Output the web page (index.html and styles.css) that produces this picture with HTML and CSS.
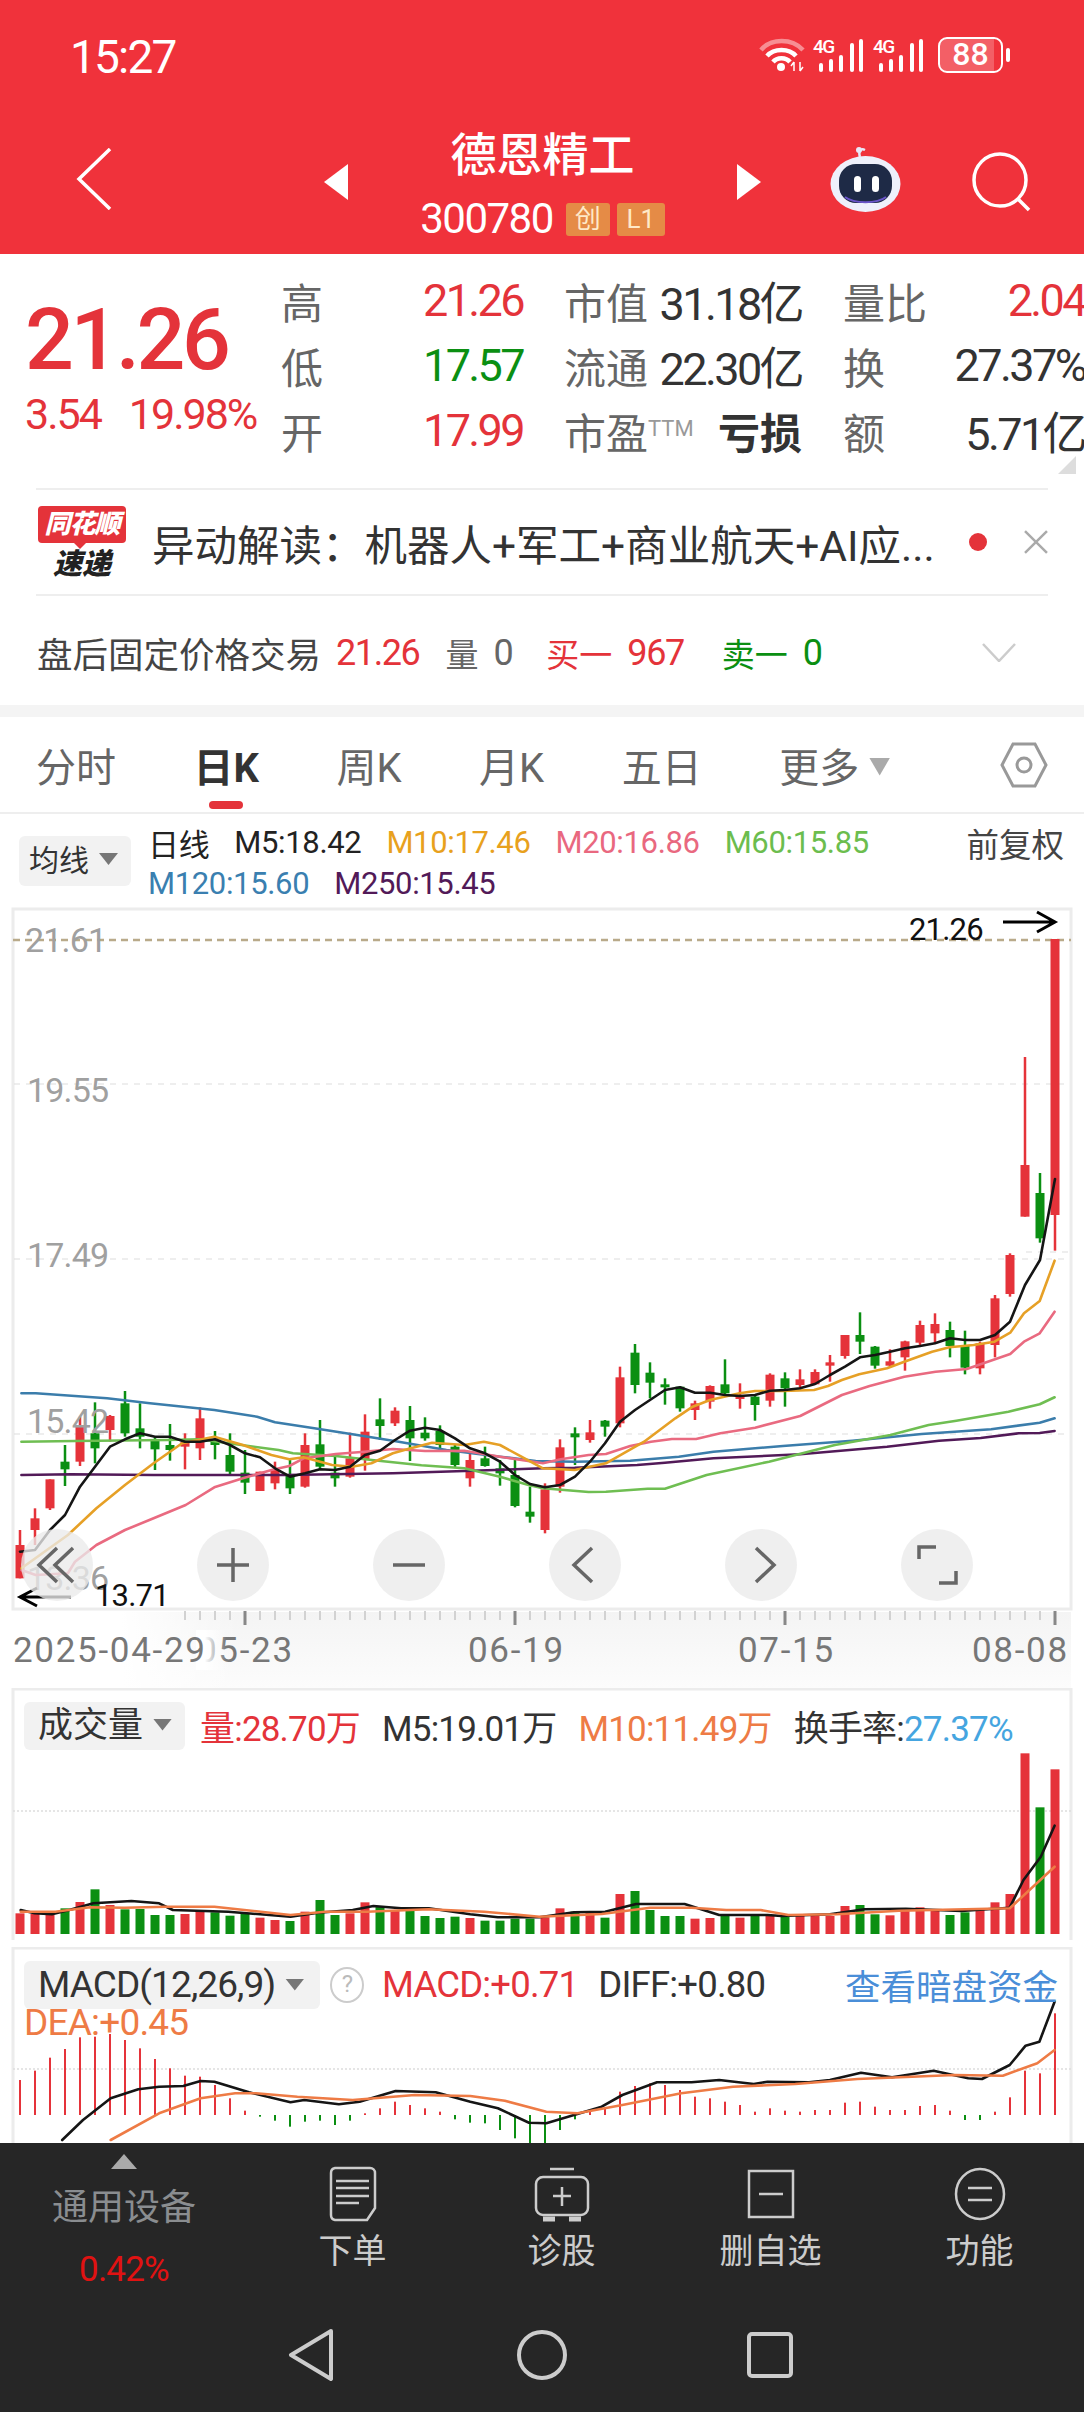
FILE: index.html
```html
<!DOCTYPE html>
<html lang="zh">
<head>
	<meta charset="UTF-8">
	<title>德恩精工 300780</title>
	<link rel="stylesheet" href="styles.css">
</head>
<body>
	<header class="top">
		<div class="status">
			<span class="time">15:27</span>
			<div class="status-icons">
				<svg class="wifi" width="46" height="35" viewBox="0 0 46 35">
					<path class="arc faint" d="M2 13 C12 1 33 1 44 13"/>
					<path class="arc" d="M8 19 C15 11 30 11 37 19"/>
					<path class="arc" d="M14 25 C18 20 27 20 31 25"/>
					<circle cx="22" cy="30" r="4" fill="#fff"/>
					<path class="arrows" d="M35 25 v9 M35 25 l-3 4 M41 34 v-9 M41 34 l3 -4"/>
				</svg>
				<svg class="signal" width="52" height="35" viewBox="0 0 52 35">
					<text x="0" y="16" class="net">4G</text>
					<rect x="6" y="26" width="4" height="9" rx="2"/>
					<rect x="16" y="22" width="4" height="13" rx="2"/>
					<rect x="26" y="18" width="4" height="17" rx="2"/>
					<rect x="37" y="6" width="4" height="29" rx="2"/>
					<rect x="46" y="2" width="4" height="33" rx="2"/>
				</svg>
				<svg class="signal" width="52" height="35" viewBox="0 0 52 35">
					<text x="0" y="16" class="net">4G</text>
					<rect x="6" y="26" width="4" height="9" rx="2"/>
					<rect x="16" y="22" width="4" height="13" rx="2"/>
					<rect x="26" y="18" width="4" height="17" rx="2"/>
					<rect x="37" y="6" width="4" height="29" rx="2"/>
					<rect x="46" y="2" width="4" height="33" rx="2"/>
				</svg>
				<div class="battery"><span>88</span></div>
				<div class="battery-nub"></div>
			</div>
		</div>
		<div class="nav">
			<svg class="back" width="36" height="62" viewBox="0 0 36 62"><path d="M34 1 L3 31 L34 61"/></svg>
			<div class="tri tri-left"></div>
			<div class="title">
				<div class="name">德恩精工</div>
				<div class="code-line">
					<span class="code">300780</span>
					<span class="tag">创</span>
					<span class="tag tag-l1">L1</span>
				</div>
			</div>
			<div class="tri tri-right"></div>
			<svg class="robot" width="71" height="66" viewBox="0 0 71 66">
				<path d="M30 10 C28 4 31 1 35 3" fill="none" stroke="#e8e8f8" stroke-width="2.5"/>
				<circle cx="29" cy="3" r="3" fill="#e8e8f8"/>
				<ellipse cx="35.5" cy="37" rx="35" ry="28" fill="#eef0fb"/>
				<rect x="9" y="17" width="53" height="39" rx="17" fill="#1e2a46"/>
				<path d="M15 50 C24 57 47 57 56 50" fill="none" stroke="#6a55c8" stroke-width="2"/>
				<rect x="24" y="29" width="7" height="16" rx="3.5" fill="#fff"/>
				<rect x="42" y="29" width="7" height="16" rx="3.5" fill="#fff"/>
			</svg>
			<svg class="search" width="60" height="60" viewBox="0 0 60 60">
				<circle cx="28" cy="28" r="26"/>
				<path d="M46 47 L57 58"/>
			</svg>
		</div>
	</header>

	<section class="quote">
		<div class="quote-main">
			<div class="price">
				<div class="last">21.26</div>
				<div class="change"><span>3.54</span><span>19.98%</span></div>
			</div>
			<div class="stats">
				<div class="stat"><span class="lbl">高</span><span class="val red">21.26</span></div>
				<div class="stat"><span class="lbl">市值</span><span class="val">31.18亿</span></div>
				<div class="stat"><span class="lbl">量比</span><span class="val red">2.04</span></div>
				<div class="stat"><span class="lbl">低</span><span class="val green">17.57</span></div>
				<div class="stat"><span class="lbl">流通</span><span class="val">22.30亿</span></div>
				<div class="stat"><span class="lbl">换</span><span class="val">27.37%</span></div>
				<div class="stat"><span class="lbl">开</span><span class="val red">17.99</span></div>
				<div class="stat"><span class="lbl">市盈<sup class="ttm">TTM</sup></span><span class="val strong">亏损</span></div>
				<div class="stat"><span class="lbl">额</span><span class="val">5.71亿</span></div>
			</div>
			<div class="corner"></div>
		</div>
		<div class="news">
			<div class="news-logo">
				<div class="news-tag">同花顺</div>
				<div class="news-fast">速递</div>
			</div>
			<div class="news-text">异动解读：机器人+军工+商业航天+AI应...</div>
			<div class="dot"></div>
			<svg class="close" width="24" height="24" viewBox="0 0 24 24"><path d="M1 1 L23 23 M23 1 L1 23"/></svg>
		</div>
		<div class="after">
			<span class="after-name">盘后固定价格交易</span>
			<span class="after-num red">21.26</span>
			<span class="after-lbl">量</span>
			<span class="after-num zero">0</span>
			<span class="after-cn red">买一</span>
			<span class="after-num red">967</span>
			<span class="after-cn green sell">卖一</span>
			<span class="after-num green">0</span>
			<svg class="after-arrow" width="34" height="19" viewBox="0 0 34 19"><path d="M1 1 L17 18 L33 1"/></svg>
		</div>
	</section>

	<div class="band"></div>

	<nav class="tabs">
		<span class="tab">分时</span>
		<span class="tab active">日K</span>
		<span class="tab">周K</span>
		<span class="tab">月K</span>
		<span class="tab">五日</span>
		<span class="tab more">更多<i class="caret"></i></span>
		<svg class="gear" width="48" height="46" viewBox="0 0 48 46">
			<path d="M13 2 H35 L46 23 L35 44 H13 L2 23 Z"/>
			<circle cx="24" cy="23" r="7"/>
		</svg>
	</nav>

	<div class="legend">
		<div class="select ma-select">均线<i class="caret dark"></i></div>
		<div class="legend-rows">
			<div class="legend-row">
				<span class="ma-black">日线</span>
				<span class="ma-black">M5:18.42</span>
				<span class="ma10">M10:17.46</span>
				<span class="ma20">M20:16.86</span>
				<span class="ma60">M60:15.85</span>
				<span class="adjust">前复权</span>
			</div>
			<div class="legend-row">
				<span class="ma120">M120:15.60</span>
				<span class="ma250">M250:15.45</span>
			</div>
		</div>
	</div>

	<div class="kline">
		<svg id="kchart" class="chart" width="1084" height="783" viewBox="0 905 1084 783"></svg>
		<div class="zoom-btns">
			<div class="zoom-btn"><svg viewBox="0 0 72 72"><path d="M36 19 L18 36 L36 53 M52 19 L34 36 L52 53"/></svg></div>
			<div class="zoom-btn"><svg viewBox="0 0 72 72"><path d="M36 19 V53 M20 36 H52"/></svg></div>
			<div class="zoom-btn"><svg viewBox="0 0 72 72"><path d="M20 36 H52"/></svg></div>
			<div class="zoom-btn"><svg viewBox="0 0 72 72"><path d="M43 19 L25 36 L43 53"/></svg></div>
			<div class="zoom-btn"><svg viewBox="0 0 72 72"><path d="M31 19 L49 36 L31 53"/></svg></div>
			<div class="zoom-btn"><svg viewBox="0 0 72 72"><path d="M18 30 V18 H35 M55 42 V54 H38"/></svg></div>
		</div>
	</div>

	<div class="panel vol-panel">
		<svg id="volchart" class="chart" width="1084" height="259" viewBox="0 1688 1084 259"></svg>
		<div class="panel-head">
			<div class="select vol-select">成交量<i class="caret dark"></i></div>
			<span class="red">量:28.70万</span>
			<span class="ink">M5:19.01万</span>
			<span class="orange">M10:11.49万</span>
			<span class="ink">换手率:<em class="sky">27.37%</em></span>
		</div>
	</div>

	<div class="panel macd-panel">
		<svg id="macdchart" class="chart" width="1084" height="196" viewBox="0 1947 1084 196"></svg>
		<div class="panel-head">
			<div class="select macd-select">MACD(12,26,9)<i class="caret dark"></i></div>
			<span class="help">?</span>
			<span class="red">MACD:+0.71</span>
			<span class="ink">DIFF:+0.80</span>
			<span class="dark-money">查看暗盘资金</span>
		</div>
		<div class="dea orange">DEA:+0.45</div>
	</div>

	<footer class="bottom">
		<div class="tools">
			<div class="sector">
				<div class="sector-up"></div>
				<div class="sector-name">通用设备</div>
				<div class="sector-pct">0.42%</div>
			</div>
			<div class="tool">
				<svg width="48" height="56" viewBox="0 0 48 56">
					<path d="M6 2 H41 A5 5 0 0 1 46 7 V42 L38 54 H6 A5 5 0 0 1 2 49 V7 A5 5 0 0 1 6 2 Z"/>
					<path d="M7 15 H40 M7 22 H40 M7 30 H40 M7 37 H30"/>
				</svg>
				<span>下单</span>
			</div>
			<div class="tool">
				<svg width="56" height="56" viewBox="0 0 56 56">
					<path d="M16 3 H40"/>
					<rect x="2" y="11" width="52" height="38" rx="7"/>
					<path d="M28 21 V40 M19 30 H37"/>
					<path d="M9 53 H21 M35 53 H47" class="thick"/>
				</svg>
				<span>诊股</span>
			</div>
			<div class="tool">
				<svg width="48" height="56" viewBox="0 0 48 56">
					<rect x="2" y="5" width="44" height="46"/>
					<path d="M12 28 H36"/>
				</svg>
				<span>删自选</span>
			</div>
			<div class="tool">
				<svg width="52" height="56" viewBox="0 0 52 56">
					<ellipse cx="26" cy="28" rx="24" ry="25"/>
					<path d="M14 22 H38 M14 34 H38"/>
				</svg>
				<span>功能</span>
			</div>
		</div>
		<div class="sysnav">
			<svg width="50" height="52" viewBox="0 0 50 52"><path d="M43 2 L3 26 L43 50 Z"/></svg>
			<svg width="50" height="52" viewBox="0 0 50 52"><circle cx="25" cy="26" r="23"/></svg>
			<svg width="48" height="48" viewBox="0 0 48 48"><rect x="3" y="3" width="42" height="42" rx="3"/></svg>
		</div>
	</footer>
	<script src="chart.js"></script>
</body>
</html>
```

FILE: styles.css
```css
* {
	box-sizing: border-box;
}
html, body {
	margin: 0;
	padding: 0;
}
body {
	width: 1084px;
	height: 2412px;
	overflow: hidden;
	background: #fff;
	color: #333;
	font-family: Roboto, "Noto Sans CJK SC", sans-serif;
}
i, em {
	font-style: normal;
}
.red { color: #e4333a; }
.green { color: #0b8f12; }
.orange { color: #ee7b45; }
.ink { color: #333; }
.sky { color: #45a5e0; }

/* red header */
.top {
	height: 254px;
	background: #f0323b;
	color: #fff;
}
.status {
	height: 114px;
	padding: 36px 74px 0 70px;
	display: flex;
	justify-content: space-between;
	align-items: flex-start;
}
.time {
	font-size: 46px;
	line-height: 42px;
	letter-spacing: -1.8px;
}
.status-icons {
	display: flex;
	align-items: flex-start;
	gap: 8px;
	margin-top: 1px;
}
.wifi .arc {
	fill: none;
	stroke: #fff;
	stroke-width: 4.5;
}
.wifi .arc.faint {
	stroke: rgba(255,255,255,.45);
}
.wifi .arrows {
	fill: none;
	stroke: #fff;
	stroke-width: 1.5;
}
.signal {
	overflow: visible;
}
.signal rect {
	fill: #fff;
}
.net {
	font-size: 19px;
	font-weight: 500;
	fill: #fff;
	letter-spacing: -1.5px;
}
.battery {
	width: 65px;
	height: 36px;
	border: 2.5px solid #fff;
	border-radius: 9px;
	background: linear-gradient(to right, rgba(255,255,255,.22) 88%, transparent 88%);
	text-align: center;
	margin-left: 5px;
}
.battery span {
	display: block;
	font-size: 32px;
	line-height: 31px;
	font-weight: 500;
}
.battery-nub {
	width: 4px;
	height: 14px;
	margin: 11px 0 0 -5px;
	background: #fff;
	border-radius: 2px;
}
.nav {
	height: 140px;
	padding-left: 76px;
	display: flex;
	align-items: flex-start;
}
.back {
	margin-top: 34px;
	fill: none;
	stroke: #fff;
	stroke-width: 3.5;
}
.tri {
	width: 24px;
	height: 36px;
	margin-top: 50px;
	background: #fff;
}
.tri-left {
	margin-left: 212px;
	clip-path: polygon(100% 0, 0 50%, 100% 100%);
}
.tri-right {
	clip-path: polygon(0 0, 100% 50%, 0 100%);
}
.title {
	width: 389px;
	text-align: center;
}
.name {
	height: 70px;
	padding-top: 14px;
	font-size: 46px;
	line-height: 54px;
	font-weight: 500;
}
.code-line {
	display: flex;
	justify-content: center;
	align-items: center;
	gap: 7px;
	margin-top: 17px;
}
.code {
	font-size: 42px;
	line-height: 36px;
	letter-spacing: -1.5px;
	margin-right: 6px;
}
.tag {
	width: 44px;
	height: 33px;
	background: #e58b46;
	border-radius: 3px;
	color: #ffe9c8;
	font-size: 26px;
	line-height: 32px;
	text-align: center;
}
.tag-l1 {
	width: 48px;
}
.robot {
	margin: 33px 0 0 69px;
}
.search {
	margin: 38px 0 0 71px;
	fill: none;
	stroke: #fff;
	stroke-width: 3.5;
}

/* quote block */
.quote {
	height: 451px;
}
.quote-main {
	position: relative;
	height: 234px;
	padding-top: 14px;
	display: flex;
}
.price {
	flex: none;
	width: 281px;
	padding: 35px 0 0 25px;
	color: #e4333a;
}
.last {
	font-size: 86px;
	line-height: 74px;
	font-weight: 500;
	letter-spacing: -3.4px;
}
.change {
	display: flex;
	gap: 28px;
	margin-top: 15px;
	font-size: 43px;
	line-height: 44px;
	letter-spacing: -2px;
}
.stats {
	flex: none;
	display: grid;
	grid-template-columns: 242px 238px 242px;
	grid-auto-rows: 65px;
	column-gap: 41px;
}
.stat {
	display: flex;
	justify-content: space-between;
	align-items: center;
	white-space: nowrap;
}
.lbl {
	font-size: 42px;
	color: #666;
}
.val {
	font-size: 45px;
	letter-spacing: -2.6px;
}
.val.strong {
	font-size: 42px;
	font-weight: 700;
	letter-spacing: 0;
}
.ttm {
	font-size: 22px;
	line-height: 0;
	color: #999;
	vertical-align: 13px;
}
.corner {
	position: absolute;
	right: 8px;
	bottom: 14px;
	width: 18px;
	height: 18px;
	background: #ddd;
	clip-path: polygon(100% 0, 100% 100%, 0 100%);
}
.news {
	height: 108px;
	margin: 0 36px;
	border-top: 2px solid #eee;
	border-bottom: 2px solid #eee;
	display: flex;
	align-items: center;
}
.news-logo {
	width: 88px;
	margin: 0 0 0 2px;
	text-align: center;
	font-style: italic;
	font-weight: 900;
}
.news-tag {
	height: 37px;
	background: #e4333a;
	border-radius: 4px;
	color: #fff;
	font-size: 26px;
	line-height: 36px;
	letter-spacing: -1px;
	position: relative;
}
.news-tag::after {
	content: "";
	position: absolute;
	left: 36px;
	bottom: -6px;
	border: 6px solid transparent;
	border-top-color: #e4333a;
	border-bottom: 0;
}
.news-fast {
	font-size: 29px;
	line-height: 30px;
	margin-top: 6px;
	color: #222;
}
.news-text {
	margin-left: 26px;
	width: 818px;
	font-size: 42.5px;
	color: #333;
	white-space: nowrap;
}
.dot {
	width: 18px;
	height: 18px;
	border-radius: 50%;
	background: #e4333a;
	margin-right: 37px;
}
.close {
	fill: none;
	stroke: #aaa;
	stroke-width: 2.5;
}
.after {
	height: 109px;
	padding: 4px 0 0 37px;
	display: flex;
	align-items: center;
	white-space: nowrap;
}
.after-name {
	font-size: 35.5px;
	color: #444;
}
.after-num {
	font-size: 36px;
	letter-spacing: -1.4px;
	margin-left: 15px;
}
.after-lbl {
	font-size: 33px;
	color: #666;
	margin-left: 26px;
}
.after-num.zero {
	color: #666;
}
.after-cn {
	font-size: 33px;
	margin-left: 34px;
}
.after-cn.sell {
	margin-left: 38px;
}
.after-arrow {
	margin-left: 160px;
	fill: none;
	stroke: #ccc;
	stroke-width: 2.5;
}
.band {
	height: 12px;
	background: #f4f4f4;
}

/* period tabs */
.tabs {
	height: 97px;
	padding: 0 36px;
	border-bottom: 2px solid #eee;
	display: flex;
	align-items: center;
	gap: 77.5px;
}
.tab {
	position: relative;
	font-size: 40px;
	color: #666;
	white-space: nowrap;
}
.tab.active {
	color: #333;
	font-weight: 700;
}
.tab.active::after {
	content: "";
	position: absolute;
	left: 15px;
	bottom: -15px;
	width: 34px;
	height: 8px;
	border-radius: 4px;
	background: #e4333a;
}
.caret {
	display: inline-block;
	width: 21px;
	height: 18px;
	margin-left: 10px;
	background: #aaa;
	clip-path: polygon(0 0, 100% 0, 50% 100%);
	vertical-align: 6px;
}
.caret.dark {
	background: #777;
	width: 19px;
	height: 12px;
}
.gear {
	margin-left: auto;
	fill: none;
	stroke: #999;
	stroke-width: 3;
}

/* moving average legend */
.legend {
	height: 91px;
	padding-left: 19px;
	display: flex;
	align-items: flex-start;
}
.select {
	background: #f2f2f2;
	border-radius: 6px;
	color: #333;
	white-space: nowrap;
}
.ma-select {
	width: 112px;
	height: 50px;
	margin-top: 22px;
	padding-left: 10px;
	font-size: 30px;
	line-height: 50px;
}
.legend-rows {
	width: 916px;
	margin: 8px 0 0 17px;
}
.legend-row {
	height: 41px;
	display: flex;
	align-items: center;
	gap: 25px;
	font-size: 31px;
	letter-spacing: -.35px;
	white-space: nowrap;
}
.ma-black { color: #222; }
.ma10 { color: #e8a11d; }
.ma20 { color: #e9687f; }
.ma60 { color: #6cbd4e; }
.ma120 { color: #3a7fb0; }
.ma250 { color: #521a58; }
.adjust {
	margin-left: auto;
	color: #444;
	font-size: 32.5px;
	letter-spacing: 0;
}

/* charts */
.kline, .panel {
	position: relative;
}
.chart {
	display: block;
}
.frame {
	fill: none;
	stroke: #ececec;
	stroke-width: 3;
}
.grid {
	stroke: #ddd;
	stroke-width: 1.2;
	stroke-dasharray: 6 6;
}
.grid-high {
	stroke: #b9aa8a;
	stroke-width: 2.5;
	stroke-dasharray: 7 5;
}
.grid-dots {
	stroke: #ddd;
	stroke-width: 1.5;
	stroke-dasharray: 2 2;
}
.up { fill: #e5333a; }
.down { fill: #0b8f12; }
.line {
	fill: none;
	stroke-linejoin: round;
	stroke-linecap: round;
	stroke-width: 2.6;
}
.l5 { stroke: #151515; }
.l10 { stroke: #e6a026; }
.l20 { stroke: #e96a80; }
.l60 { stroke: #6fbe52; }
.l120 { stroke: #3b7dab; }
.l250 { stroke: #521a58; }
.vol-ma10 { stroke: #ee7b45; }
.tick { fill: #d2d2d2; }
.tick-big { fill: #888; }
.axis {
	font-size: 34px;
	fill: #a0a0a0;
	letter-spacing: -.8px;
}
.mark {
	font-size: 31px;
	fill: #111;
	letter-spacing: -.8px;
}
.arrow {
	fill: none;
	stroke: #000;
	stroke-width: 3;
}
.date {
	font-size: 35px;
	fill: #777;
	letter-spacing: 1.7px;
}
.zoom-btns {
	position: absolute;
	top: 624px;
	left: 21px;
	display: flex;
	gap: 104px;
}
.zoom-btn {
	width: 72px;
	height: 72px;
	border-radius: 50%;
	background: rgba(235,235,235,.78);
}
.zoom-btn svg {
	display: block;
	fill: none;
	stroke: #666;
	stroke-width: 3.5;
}
.panel-head {
	position: absolute;
	top: 12px;
	left: 24px;
	right: 26px;
	display: flex;
	align-items: center;
	gap: 22px;
	font-size: 35px;
	letter-spacing: -.8px;
	white-space: nowrap;
}
.macd-panel .panel-head {
	font-size: 36.5px;
	gap: 20px;
}
.vol-panel {
	height: 259px;
}
.vol-select {
	width: 161px;
	height: 48px;
	margin-right: -7px;
	padding-left: 14px;
	font-size: 35px;
	line-height: 48px;
	letter-spacing: 0;
}
.macd-panel {
	height: 196px;
}
.macd-panel .macd-select {
	width: 296px;
	height: 48px;
	padding-left: 14px;
	margin-right: -10px;
	font-size: 37px;
	line-height: 48px;
	letter-spacing: -.9px;
}
.macd-panel .help {
	width: 34px;
	height: 36px;
	border: 2.5px solid #ccc;
	border-radius: 50%;
	color: #bbb;
	font-size: 24px;
	line-height: 31px;
	text-align: center;
	margin-right: -2px;
}
.macd-panel .dark-money {
	margin-left: auto;
	color: #4a8ed8;
	font-size: 35.5px;
	letter-spacing: 0;
}
.dea {
	position: absolute;
	top: 54px;
	left: 24px;
	font-size: 37px;
	letter-spacing: -.8px;
}

/* bottom bar */
.bottom {
	height: 269px;
	background: #262626;
}
.tools {
	height: 160px;
	display: flex;
}
.sector {
	width: 248px;
	padding-top: 11px;
	text-align: center;
}
.sector-up {
	width: 26px;
	height: 15px;
	margin: 0 auto;
	background: #aaa;
	clip-path: polygon(50% 0, 100% 100%, 0 100%);
}
.sector-name {
	margin-top: 17px;
	font-size: 36px;
	line-height: 44px;
	color: #8a8d90;
}
.sector-pct {
	margin-top: 18px;
	font-size: 35px;
	line-height: 44px;
	color: #e01212;
	letter-spacing: -.8px;
}
.tool {
	width: 209px;
	padding-top: 23px;
	display: flex;
	flex-direction: column;
	align-items: center;
	color: #ccc;
	font-size: 34px;
}
.tool svg {
	fill: none;
	stroke: #ccc;
	stroke-width: 2.5;
}
.tool .thick {
	stroke-width: 5;
}
.tool span {
	margin-top: 6px;
	line-height: 46px;
}
.sysnav {
	padding: 26px 0 0 288px;
	display: flex;
	align-items: center;
	gap: 179px;
}
.sysnav svg {
	fill: none;
	stroke: #ccc;
	stroke-width: 4;
	stroke-linejoin: round;
}
```

FILE: chart.js
```js
var NS = 'http://www.w3.org/2000/svg';

function add(svg, tag, attrs, text) {
	var el = document.createElementNS(NS, tag);
	for (var k in attrs) el.setAttribute(k, attrs[k]);
	if (text) el.textContent = text;
	svg.appendChild(el);
	return el;
}

function rowX(i) { return 20 + 15 * i; }

// dir, wick top, body top, body bottom, wick bottom
// y values are in thirds of a pixel, measured from y=1200
var candles = [
	['u',990,1035,1135,1135],['u',925,955,990,1035],['u',838,838,925,930],['d',735,785,808,858],
	['u',650,680,785,798],['d',607,700,745,790],['u',645,648,690,725],['d',573,610,700,710],
	['d',610,685,710,745],['d',710,720,748,810],['d',672,735,750,782],['u',700,725,740,808],
	['u',622,655,745,780],['d',693,720,735,778],['d',700,765,815,822],['d',750,818,848,882],
	['u',815,815,873,873],['u',785,810,850,868],['d',780,828,865,882],['u',700,735,860,863],
	['d',660,733,800,810],['d',765,818,835,860],['u',698,775,830,833],['u',643,695,780,812],
	['d',595,658,678,720],['u',622,632,670,678],['d',618,660,715,783],['d',652,698,715,722],
	['d',676,693,735,745],['d',735,740,795,803],['u',760,780,835,860],['d',740,775,798,800],
	['d',780,805,820,857],['d',780,825,918,922],['d',860,935,950,968],['u',850,868,990,1000],
	['u',718,742,860,878],['d',682,700,712,795],['u',660,697,720,728],['d',660,662,680,710],
	['u',500,532,670,682],['d',432,458,555,580],['d',487,518,548,595],['d',535,553,562,614],
	['d',560,560,625,635],['u',602,610,630,660],['u',556,558,605,626],['d',478,553,580,590],
	['u',550,588,597,626],['d',585,590,615,662],['u',520,524,602,620],['d',517,535,565,620],
	['u',508,538,555,565],['u',508,516,553,555],['u',465,487,497,545],['u',405,405,468,476],
	['d',337,405,425,462],['d',438,440,497,506],['u',448,484,497,500],['u',422,424,472,512],
	['u',362,375,428,435],['u',340,372,400,430],['d',365,390,438,472],['d',392,438,503,523],
	['u',425,430,505,523],['u',285,295,435,472],['u',160,165,282,290],['u',-429,-105,50,50],
	['d',-81,-21,115,128],['u',-783,-783,45,152]
];

// moving averages: left half and right half of the chart have their own x scale
function lf(p) { return p.map(function (q) { return [q[0] / 2.8, 1200 + q[1] / 3]; }); }
function rt(p) { return p.map(function (q) { return [540 + q[0] / 2.882, 1200 + q[1] / 3]; }); }

var m5y = [1055,1050,990,945,860,800,740,718,700,710,710,725,725,718,735,760,772,805,830,820,808,810,800,765,752,720,692,683,690,715,745,760,785,825,852,862,855,830,785,730,665,630,600,570,562,578,578,585,588,585,572,570,565,552,525,500,472,465,455,445,438,430,415,420,420,405,365,255,180,-63];

var maLines = {
	l250: lf([[60,825],[200,823],[430,825],[800,825],[1100,820],[1300,813],[1520,805]])
		.concat(rt([[100,803],[280,795],[360,788],[500,775],[750,763],[1000,740],[1150,722],[1270,714],[1380,700],[1440,699],[1483,693]])),
	l120: lf([[60,580],[100,580],[300,595],[420,610],[600,630],[720,650],[770,667],[880,685],[1000,705],[1100,722],[1250,750],[1400,770],[1500,783]])
		.concat(rt([[100,785],[260,782],[400,770],[500,755],[700,738],[900,722],[1100,702],[1300,688],[1440,668],[1483,655]])),
	l60: lf([[60,725],[210,723],[470,720],[560,718],[640,730],[780,750],[820,760],[940,768],[1060,782],[1180,796],[1300,805],[1400,830],[1480,855],[1520,865]])
		.concat(rt([[140,876],[190,875],[310,866],[360,866],[480,825],[660,785],[850,735],[1010,705],[1120,675],[1200,662],[1350,635],[1440,613],[1483,592]])),
	l20: lf([[60,1110],[100,1125],[190,1120],[210,1085],[270,1035],[350,990],[430,955],[520,915],[600,862],[680,835],[760,810],[810,798],[850,775],[900,768],[940,762],[1020,755],[1100,747],[1190,753],[1300,752],[1400,770],[1520,790]])
		.concat(rt([[60,778],[140,765],[190,762],[260,738],[320,725],[380,717],[450,717],[520,700],[620,683],[750,648],[870,585],[950,558],[1050,530],[1140,515],[1230,507],[1355,462],[1395,425],[1440,400],[1483,335]])),
	l10: lf([[60,1105],[190,1005],[270,925],[350,855],[430,790],[510,730],[600,710],[680,735],[760,765],[810,778],[850,772],[930,795],[985,800],[1040,790],[1100,760],[1150,745],[1210,728],[1300,735],[1355,725],[1400,735],[1460,770],[1520,805]])
		.concat(rt([[100,810],[190,790],[300,725],[390,655],[440,620],[490,600],[575,580],[620,573],[700,573],[790,570],[830,558],[870,540],[920,523],[1000,505],[1050,485],[1130,455],[1180,442],[1250,435],[1310,425],[1355,398],[1395,340],[1440,303],[1483,182]]))
};
maLines.l5 = m5y.map(function (v, i) { return [rowX(i), 1200 + v / 3]; });

function poly(svg, pts, cls) {
	add(svg, 'polyline', {
		'class': 'line ' + cls,
		points: pts.map(function (p) { return p[0].toFixed(1) + ',' + p[1].toFixed(1); }).join(' ')
	});
}

function drawKline() {
	var svg = document.getElementById('kchart');
	var defs = add(svg, 'defs', {});
	var g = add(defs, 'linearGradient', { id: 'axisFade', x1: 0, y1: 0, x2: 0, y2: 1 });
	add(g, 'stop', { offset: 0, 'stop-color': '#f4f4f4' });
	add(g, 'stop', { offset: 1, 'stop-color': '#fcfcfc' });
	var f = add(defs, 'linearGradient', { id: 'dateFade', x1: 0, y1: 0, x2: 1, y2: 0 });
	add(f, 'stop', { offset: 0.3, 'stop-color': '#fff', 'stop-opacity': 1 });
	add(f, 'stop', { offset: 1, 'stop-color': '#fff', 'stop-opacity': 0 });

	add(svg, 'rect', { x: 70, y: 1612, width: 1001, height: 76, fill: 'url(#axisFade)' });
	add(svg, 'rect', { x: 70, y: 1612, width: 170, height: 76, fill: 'url(#dateFade)' });
	add(svg, 'rect', { 'class': 'frame', x: 13, y: 909, width: 1058, height: 700 });
	[1084, 1259, 1434].forEach(function (y) {
		add(svg, 'line', { 'class': 'grid', x1: 14, x2: 1070, y1: y, y2: y });
	});
	add(svg, 'line', { 'class': 'grid-high', x1: 13, x2: 1071, y1: 940, y2: 940 });
	add(svg, 'line', { 'class': 'grid', x1: 1026, x2: 1071, y1: 1252, y2: 1252 });

	candles.forEach(function (c, i) {
		var x = rowX(i), cls = c[0] == 'u' ? 'up' : 'down';
		add(svg, 'rect', { 'class': cls, x: x - 1.25, y: 1200 + c[1] / 3, width: 2.5, height: (c[4] - c[1]) / 3 });
		add(svg, 'rect', { 'class': cls, x: x - 4.5, y: 1200 + c[2] / 3, width: 9, height: (c[3] - c[2]) / 3 });
	});

	[['21.61', 25, 952], ['19.55', 27, 1102], ['17.49', 27, 1267], ['15.42', 27, 1433], ['13.36', 27, 1590]].forEach(function (a) {
		add(svg, 'text', { 'class': 'axis', x: a[1], y: a[2] }, a[0]);
	});

	['l250', 'l120', 'l60', 'l20', 'l10', 'l5'].forEach(function (k) { poly(svg, maLines[k], k); });

	add(svg, 'text', { 'class': 'mark', x: 909, y: 940 }, '21.26');
	add(svg, 'path', { 'class': 'arrow', d: 'M1003 922 H1055 M1037 912 L1055 922 L1037 932' });
	add(svg, 'text', { 'class': 'mark', x: 95, y: 1606 }, '13.71');
	add(svg, 'path', { 'class': 'arrow', d: 'M71 1597 H20 M37 1588 L20 1597 L37 1606' });

	for (var i = 11; i < 70; i++) {
		var big = i == 15 || i == 33 || i == 51 || i == 69;
		add(svg, 'rect', big
			? { 'class': 'tick-big', x: rowX(i) - 1.5, y: 1611, width: 3, height: 14 }
			: { 'class': 'tick', x: rowX(i) - 1, y: 1611, width: 2, height: 9 });
	}

	add(svg, 'text', { 'class': 'date', x: 197, y: 1662 }, '05-23');
	add(svg, 'rect', { x: 196, y: 1630, width: 30, height: 40, fill: 'url(#dateFade)' });
	add(svg, 'text', { 'class': 'date', x: 13, y: 1662 }, '2025-04-29');
	add(svg, 'text', { 'class': 'date', x: 468, y: 1662 }, '06-19');
	add(svg, 'text', { 'class': 'date', x: 738, y: 1662 }, '07-15');
	add(svg, 'text', { 'class': 'date', x: 972, y: 1662 }, '08-08');
}

// volume bars, tops in thirds of a pixel from y=1680
var vols = ['u700','u702','u705','d685','u666','d628','u675','d688','d687','d705','d705','u702','u695','d697','d707','d700','u713','u720','d723','u695','d660','d705','u700','u667','d678','u692','d692','d708','d714','d710','u714','d722','d722','d716','d716','u712','u685','d695','u697','d713','u642','d633','d690','d708','d708','u716','u714','d705','u713','d708','u708','d705','u705','u705','u708','u678','d675','d703','u706','u690','u682','u692','d705','d697','u690','u667','u642','u220','d382','u268'];

function wide(p, top) {
	return p.map(function (q) { return [q[0] / 1.446, top + q[1] / 3]; });
}

function drawVolume() {
	var svg = document.getElementById('volchart');
	add(svg, 'path', { 'class': 'frame', d: 'M13 1940 V1689 H1071 V1940' });
	add(svg, 'line', { 'class': 'grid-dots', x1: 13, x2: 1071, y1: 1811, y2: 1811 });
	vols.forEach(function (v, i) {
		var top = 1680 + parseInt(v.slice(1), 10) / 3;
		add(svg, 'rect', { 'class': v[0] == 'u' ? 'up' : 'down', x: rowX(i) - 4.5, y: top, width: 9, height: 1934 - top });
	});
	poly(svg, wide([[30,690],[50,700],[75,703],[100,690],[135,670],[190,663],[230,670],[250,690],[330,695],[420,710],[460,698],[510,690],[540,678],[580,685],[620,685],[680,703],[720,712],[780,712],[830,697],[875,695],[920,672],[990,672],[1040,705],[1110,705],[1130,708],[1200,703],[1250,688],[1310,686],[1390,693],[1460,683],[1480,600],[1505,530],[1525,437]], 1680), 'l5');
	poly(svg, wide([[30,695],[80,695],[130,682],[180,683],[240,680],[310,680],[420,705],[470,695],[530,695],[620,688],[700,695],[780,710],[870,702],[940,683],[1000,683],[1050,690],[1100,690],[1140,705],[1210,703],[1300,692],[1460,685],[1525,560]], 1680), 'vol-ma10');
}

var macdTops = [1200,1172,1133,1107,1072,1070,1062,1080,1105,1137,1165,1187,1190,1215,1255,1292,1310,1322,1340,1325,1322,1335,1322,1300,1285,1265,1275,1285,1295,1318,1328,1330,1350,1375,1390,1390,1350,1318,1295,1285,1235,1218,1210,1215,1230,1250,1255,1265,1275,1295,1285,1292,1295,1290,1290,1268,1265,1280,1290,1290,1278,1275,1292,1320,1320,1295,1252,1172,1180,1000];

function drawMacd() {
	var svg = document.getElementById('macdchart');
	add(svg, 'path', { 'class': 'frame', d: 'M13 2143 V1948 H1071 V2143' });
	add(svg, 'line', { 'class': 'grid-dots', x1: 13, x2: 1071, y1: 2069, y2: 2069 });
	macdTops.forEach(function (v, i) {
		var y = 1680 + v / 3, base = 2115;
		add(svg, 'rect', {
			'class': y < base ? 'up' : 'down',
			x: rowX(i) - 1,
			y: Math.min(y, base),
			width: 2,
			height: Math.abs(base - y)
		});
	});
	poly(svg, wide([[90,1380],[120,1320],[160,1255],[200,1228],[230,1220],[265,1218],[290,1203],[310,1205],[360,1237],[420,1267],[440,1260],[490,1273],[520,1265],[572,1233],[630,1237],[680,1265],[720,1285],[765,1328],[790,1330],[830,1305],[870,1280],[900,1245],[950,1207],[1000,1207],[1040,1200],[1090,1212],[1110,1205],[1170,1207],[1200,1200],[1245,1178],[1290,1192],[1350,1172],[1400,1195],[1420,1197],[1460,1155],[1483,1097],[1503,1085],[1525,965]], 1680), 'l5');
	poly(svg, wide([[160,1380],[230,1300],[290,1255],[340,1240],[370,1240],[430,1250],[510,1260],[600,1245],[680,1248],[730,1262],[790,1295],[835,1300],[900,1275],[985,1240],[1060,1220],[1150,1212],[1240,1197],[1380,1185],[1450,1187],[1500,1150],[1525,1110]], 1680), 'vol-ma10');
}

drawKline();
drawVolume();
drawMacd();
```
